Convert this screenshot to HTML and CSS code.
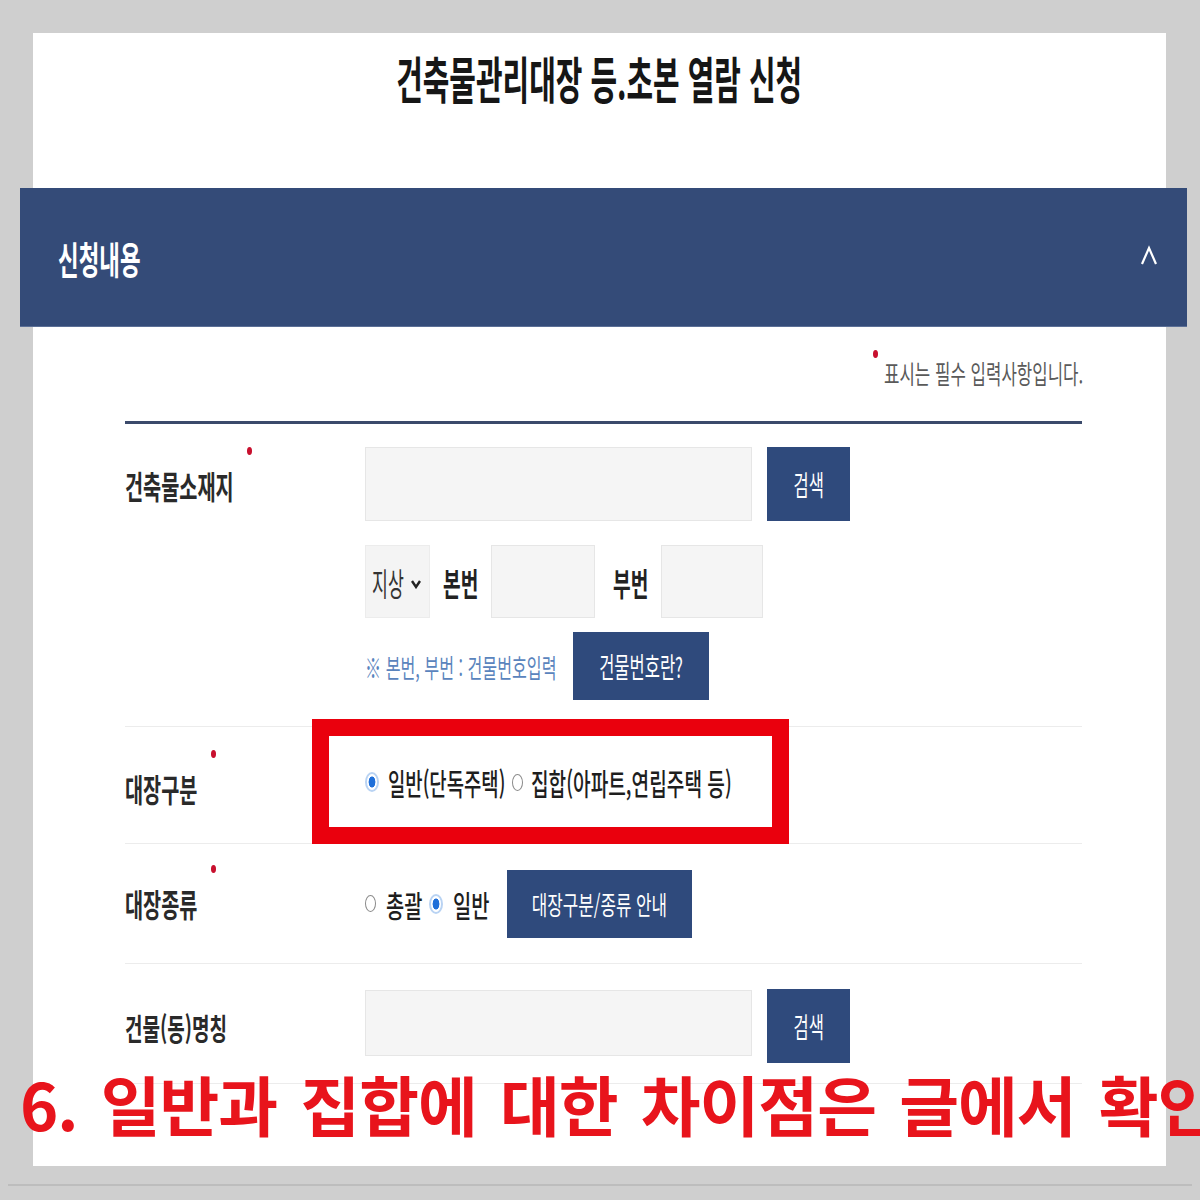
FILE: index.html
```html
<!DOCTYPE html>
<html lang="ko">
<head>
<meta charset="utf-8">
<title>건축물관리대장 등.초본 열람 신청</title>
<link rel="stylesheet" href="styles.css">
</head>
<body>
<div class="page">
  <div class="card">
    <div class="title-wrap">
      <h1 class="title"><span class="sq">건축물관리대장 등.초본 열람 신청</span></h1>
    </div>

    <div class="bar">
      <span class="bar-title"><span class="sq">신청내용</span></span>
      <svg class="chev" viewBox="0 0 20 22" width="20" height="22"><polyline points="3,19 10,3 17,19" fill="none" stroke="#ffffff" stroke-width="2.2"/></svg>
    </div>

    <div class="content">
      <div class="note">
        <span class="note-dot"></span>
        <span class="note-text"><span class="sq">표시는 필수 입력사항입니다.</span></span>
      </div>
      <div class="rule"></div>

      <div class="row row-addr">
        <div class="label">
          <span class="lab"><span class="lt w108"><span class="sq">건축물소재지</span></span><i class="req"></i></span>
        </div>
        <div class="field">
          <div class="line line-1">
            <div class="input input-wide"></div>
            <div class="btn btn-search"><span class="sq">검색</span></div>
          </div>
          <div class="line line-2">
            <div class="select">
              <span class="sel-text"><span class="sq">지상</span></span>
              <svg class="sel-arrow" viewBox="0 0 12 10" width="12" height="10"><polyline points="2,2 6,8 10,2" fill="none" stroke="#222" stroke-width="2.4"/></svg>
            </div>
            <span class="inl-label first"><span class="sq">본번</span></span>
            <div class="input input-num"></div>
            <span class="inl-label second"><span class="sq">부번</span></span>
            <div class="input input-num2"></div>
          </div>
          <div class="line line-3">
            <span class="hint"><span class="sq">※ 본번, 부번 : 건물번호입력</span></span>
            <div class="btn btn-bno"><span class="sq">건물번호란?</span></div>
          </div>
        </div>
      </div>

      <div class="row row-kind">
        <div class="label">
          <span class="lab"><span class="lt w72"><span class="sq">대장구분</span></span><i class="req"></i></span>
        </div>
        <div class="radios">
          <span class="radio on"></span>
          <span class="rtext r-ilban"><span class="sq">일반(단독주택)</span></span>
          <span class="radio"></span>
          <span class="rtext r-jiphap"><span class="sq">집합(아파트,연립주택 등)</span></span>
        </div>
        <div class="mark"></div>
      </div>

      <div class="row row-type">
        <div class="label">
          <span class="lab"><span class="lt w72"><span class="sq">대장종류</span></span><i class="req"></i></span>
        </div>
        <div class="radios">
          <span class="radio"></span>
          <span class="rtext r-short"><span class="sq">총괄</span></span>
          <span class="radio on"></span>
          <span class="rtext r-short"><span class="sq">일반</span></span>
          <div class="btn btn-guide"><span class="sq">대장구분/종류 안내</span></div>
        </div>
      </div>

      <div class="row row-name">
        <div class="label">
          <span class="lab"><span class="lt w100"><span class="sq">건물(동)명칭</span></span></span>
        </div>
        <div class="line line-name">
          <div class="input input-name"></div>
          <div class="btn btn-search2"><span class="sq">검색</span></div>
        </div>
      </div>
    </div>

    <div class="caption">6. 일반과 집합에 대한 차이점은 글에서 확인</div>
  </div>
  <div class="page-foot"></div>
</div>
</body>
</html>
```

FILE: styles.css
```css
html, body {
  margin: 0;
  padding: 0;
  overflow: hidden;
}
body {
  background: #cfcfcf;
  font-family: "Noto Sans CJK KR", "Noto Sans", sans-serif;
  color: #222;
}
.page {
  width: 1200px;
  height: 1200px;
  padding-top: 33px;
  box-sizing: border-box;
}
.card {
  position: relative;
  margin-left: 33px;
  width: 1133px;
  height: 1133px;
  background: #ffffff;
}

/* squeezed text */
.sq {
  display: inline-block;
  white-space: nowrap;
  transform: scaleX(0.6);
  transform-origin: left center;
}

.title-wrap {
  height: 155px;
  padding-top: 18px;
  box-sizing: border-box;
  display: flex;
  justify-content: center;
}
.title {
  margin: 0;
  font-size: 50px;
  line-height: 52px;
  font-weight: 700;
  color: #161616;
  white-space: nowrap;
}
.title .sq {
  transform: scaleX(0.578);
  transform-origin: center center;
}

.bar {
  margin-left: -13px;
  margin-right: -21px;
  height: 138px;
  background: #344b78;
  display: flex;
  align-items: center;
  justify-content: space-between;
  padding: 0 28px 0 38px;
  box-shadow: 0 1px 0 #5b6f96;
}
.bar-title {
  font-size: 38px;
  font-weight: 700;
  color: #ffffff;
  width: 90px;
  white-space: nowrap;
}
.bar-title .sq { transform: scaleX(0.59); }
.chev { display: block; margin-top: -2px; }

.content {
  padding: 0 84px 0 92px;
}
.note {
  margin-top: 22px;
  height: 40px;
  display: flex;
  justify-content: flex-end;
  align-items: flex-end;
}
.note-dot {
  align-self: flex-start;
  width: 5px;
  height: 8px;
  border-radius: 50%;
  background: #c8102e;
  margin-right: 6px;
  margin-top: 2px;
}
.note-text {
  width: 198px;
  font-size: 26px;
  line-height: 30px;
  color: #5a5a5a;
  white-space: nowrap;
}
.note-text .sq { transform: scaleX(0.645); }
.rule {
  margin-top: 33px;
  height: 3px;
  background: #3b4a6b;
}

.row {
  position: relative;
  display: flex;
  border-bottom: 1px solid #ececec;
}
.label {
  width: 240px;
  flex: none;
}
.lab {
  display: flex;
  align-items: center;
  height: 60px;
  font-size: 32px;
  font-weight: 700;
  color: #2a2a2a;
}
.lt { white-space: nowrap; }
.w108 { width: 108px; }
.w72 { width: 72px; }
.w100 { width: 100px; }
.w108 .sq { transform: scaleX(0.615); }
.w72 .sq { transform: scaleX(0.615); }
.w100 .sq { transform: scaleX(0.635); }
.req {
  align-self: flex-start;
  margin-top: -8px;
  margin-left: 14px;
  width: 5px;
  height: 8px;
  border-radius: 50%;
  background: #c8102e;
}

.input {
  background: #f5f5f5;
  border: 1px solid #e6e6e6;
  box-sizing: border-box;
}
.btn {
  background: #2f4a7c;
  color: #ffffff;
  display: flex;
  align-items: center;
  justify-content: center;
  box-sizing: border-box;
  white-space: nowrap;
}
.btn .sq { transform-origin: center center; }

/* row 1 */
.row-addr {
  padding: 23px 0 26px;
}
.row-addr .label { padding-top: 8px; }
.field { display: flex; flex-direction: column; }
.line { display: flex; align-items: center; }
.line-1 { height: 74px; }
.input-wide { width: 387px; height: 74px; }
.btn-search { width: 83px; height: 74px; margin-left: 15px; font-size: 28px; }
.btn-search .sq { transform: scaleX(0.59); }

.line-2 { margin-top: 24px; height: 73px; }
.select {
  width: 65px;
  height: 73px;
  background: #f4f4f4;
  border: 1px solid #ececec;
  box-sizing: border-box;
  display: flex;
  align-items: center;
  padding-left: 6px;
}
.sel-text {
  width: 37px;
  font-size: 32px;
  color: #333;
  white-space: nowrap;
}
.sel-text .sq { transform: scaleX(0.54); }
.sel-arrow { display: block; margin-top: 4px; margin-left: 1px; }
.inl-label {
  font-size: 32px;
  font-weight: 700;
  color: #222;
  white-space: nowrap;
  width: 37px;
}
.inl-label .sq { transform: scaleX(0.6); }
.inl-label.first { margin-left: 13px; }
.inl-label.second { margin-left: 18px; }
.input-num { width: 104px; height: 73px; margin-left: 11px; }
.input-num2 { width: 102px; height: 73px; margin-left: 11px; }

.line-3 { margin-top: 14px; height: 68px; }
.hint {
  width: 191px;
  font-size: 26px;
  color: #5a84bd;
  white-space: nowrap;
}
.hint .sq { transform: scaleX(0.62); }
.btn-bno { width: 136px; height: 68px; margin-left: 17px; font-size: 28px; }
.btn-bno .sq { transform: scaleX(0.59); }

/* row 2 */
.row-kind {
  height: 117px;
  box-sizing: border-box;
  align-items: center;
}
.row-kind .lab { margin-top: 6px; }
.radios {
  display: flex;
  align-items: center;
}
.row-kind .radios { margin-top: -6px; }
.radio {
  flex: none;
  width: 11px;
  height: 17px;
  border-radius: 50%;
  border: 1px solid #8a8a8a;
  box-sizing: border-box;
  background: #fff;
}
.radio.on {
  width: 14px;
  height: 20px;
  border: 2px solid #b9d3f3;
  background: radial-gradient(ellipse at center, #1f6fd9 0 45%, #ffffff 52% 100%);
}
.rtext {
  font-size: 30px;
  font-weight: 500;
  color: #1e1e1e;
  white-space: nowrap;
  margin-left: 6px;
  margin-right: 7px;
}
.rtext .sq { transform: scaleX(0.628); }
.r-ilban { width: 117px; margin-left: 9px; }
.r-jiphap { width: 200px; margin-left: 8px; }
.r-jiphap .sq { transform: scaleX(0.638); }
.mark {
  position: absolute;
  left: 187px;
  top: -8px;
  width: 477px;
  height: 125px;
  border: 17px solid #ea000d;
  box-sizing: border-box;
}

/* row 3 */
.row-type {
  height: 120px;
  box-sizing: border-box;
  align-items: center;
}
.row-type .lab { margin-top: -2px; }
.r-short { width: 36px; margin-left: 10px; margin-right: 7px; }
.r-short .sq { transform: scaleX(0.66); }
.btn-guide {
  width: 185px;
  height: 68px;
  margin-left: 11px;
  font-size: 26px;
}
.btn-guide .sq { transform: scaleX(0.648); }

/* row 4 */
.row-name {
  height: 120px;
  box-sizing: border-box;
  padding-top: 25px;
}
.row-name .lab { margin-top: 8px; font-size: 30px; }
.line-name { align-items: flex-start; }
.input-name { width: 387px; height: 66px; margin-top: 1px; }
.btn-search2 { width: 83px; height: 74px; margin-left: 15px; font-size: 28px; }
.btn-search2 .sq { transform: scaleX(0.59); }

/* annotation caption */
.caption {
  position: absolute;
  left: -13px;
  top: 1036px;
  font-size: 65px;
  line-height: 68px;
  font-weight: 700;
  color: #e8141c;
  white-space: nowrap;
  letter-spacing: -1px;
  word-spacing: 6px;
}

.page-foot {
  margin: 18px 8px 0;
  border-top: 2px solid #bdbdbd;
}
```
